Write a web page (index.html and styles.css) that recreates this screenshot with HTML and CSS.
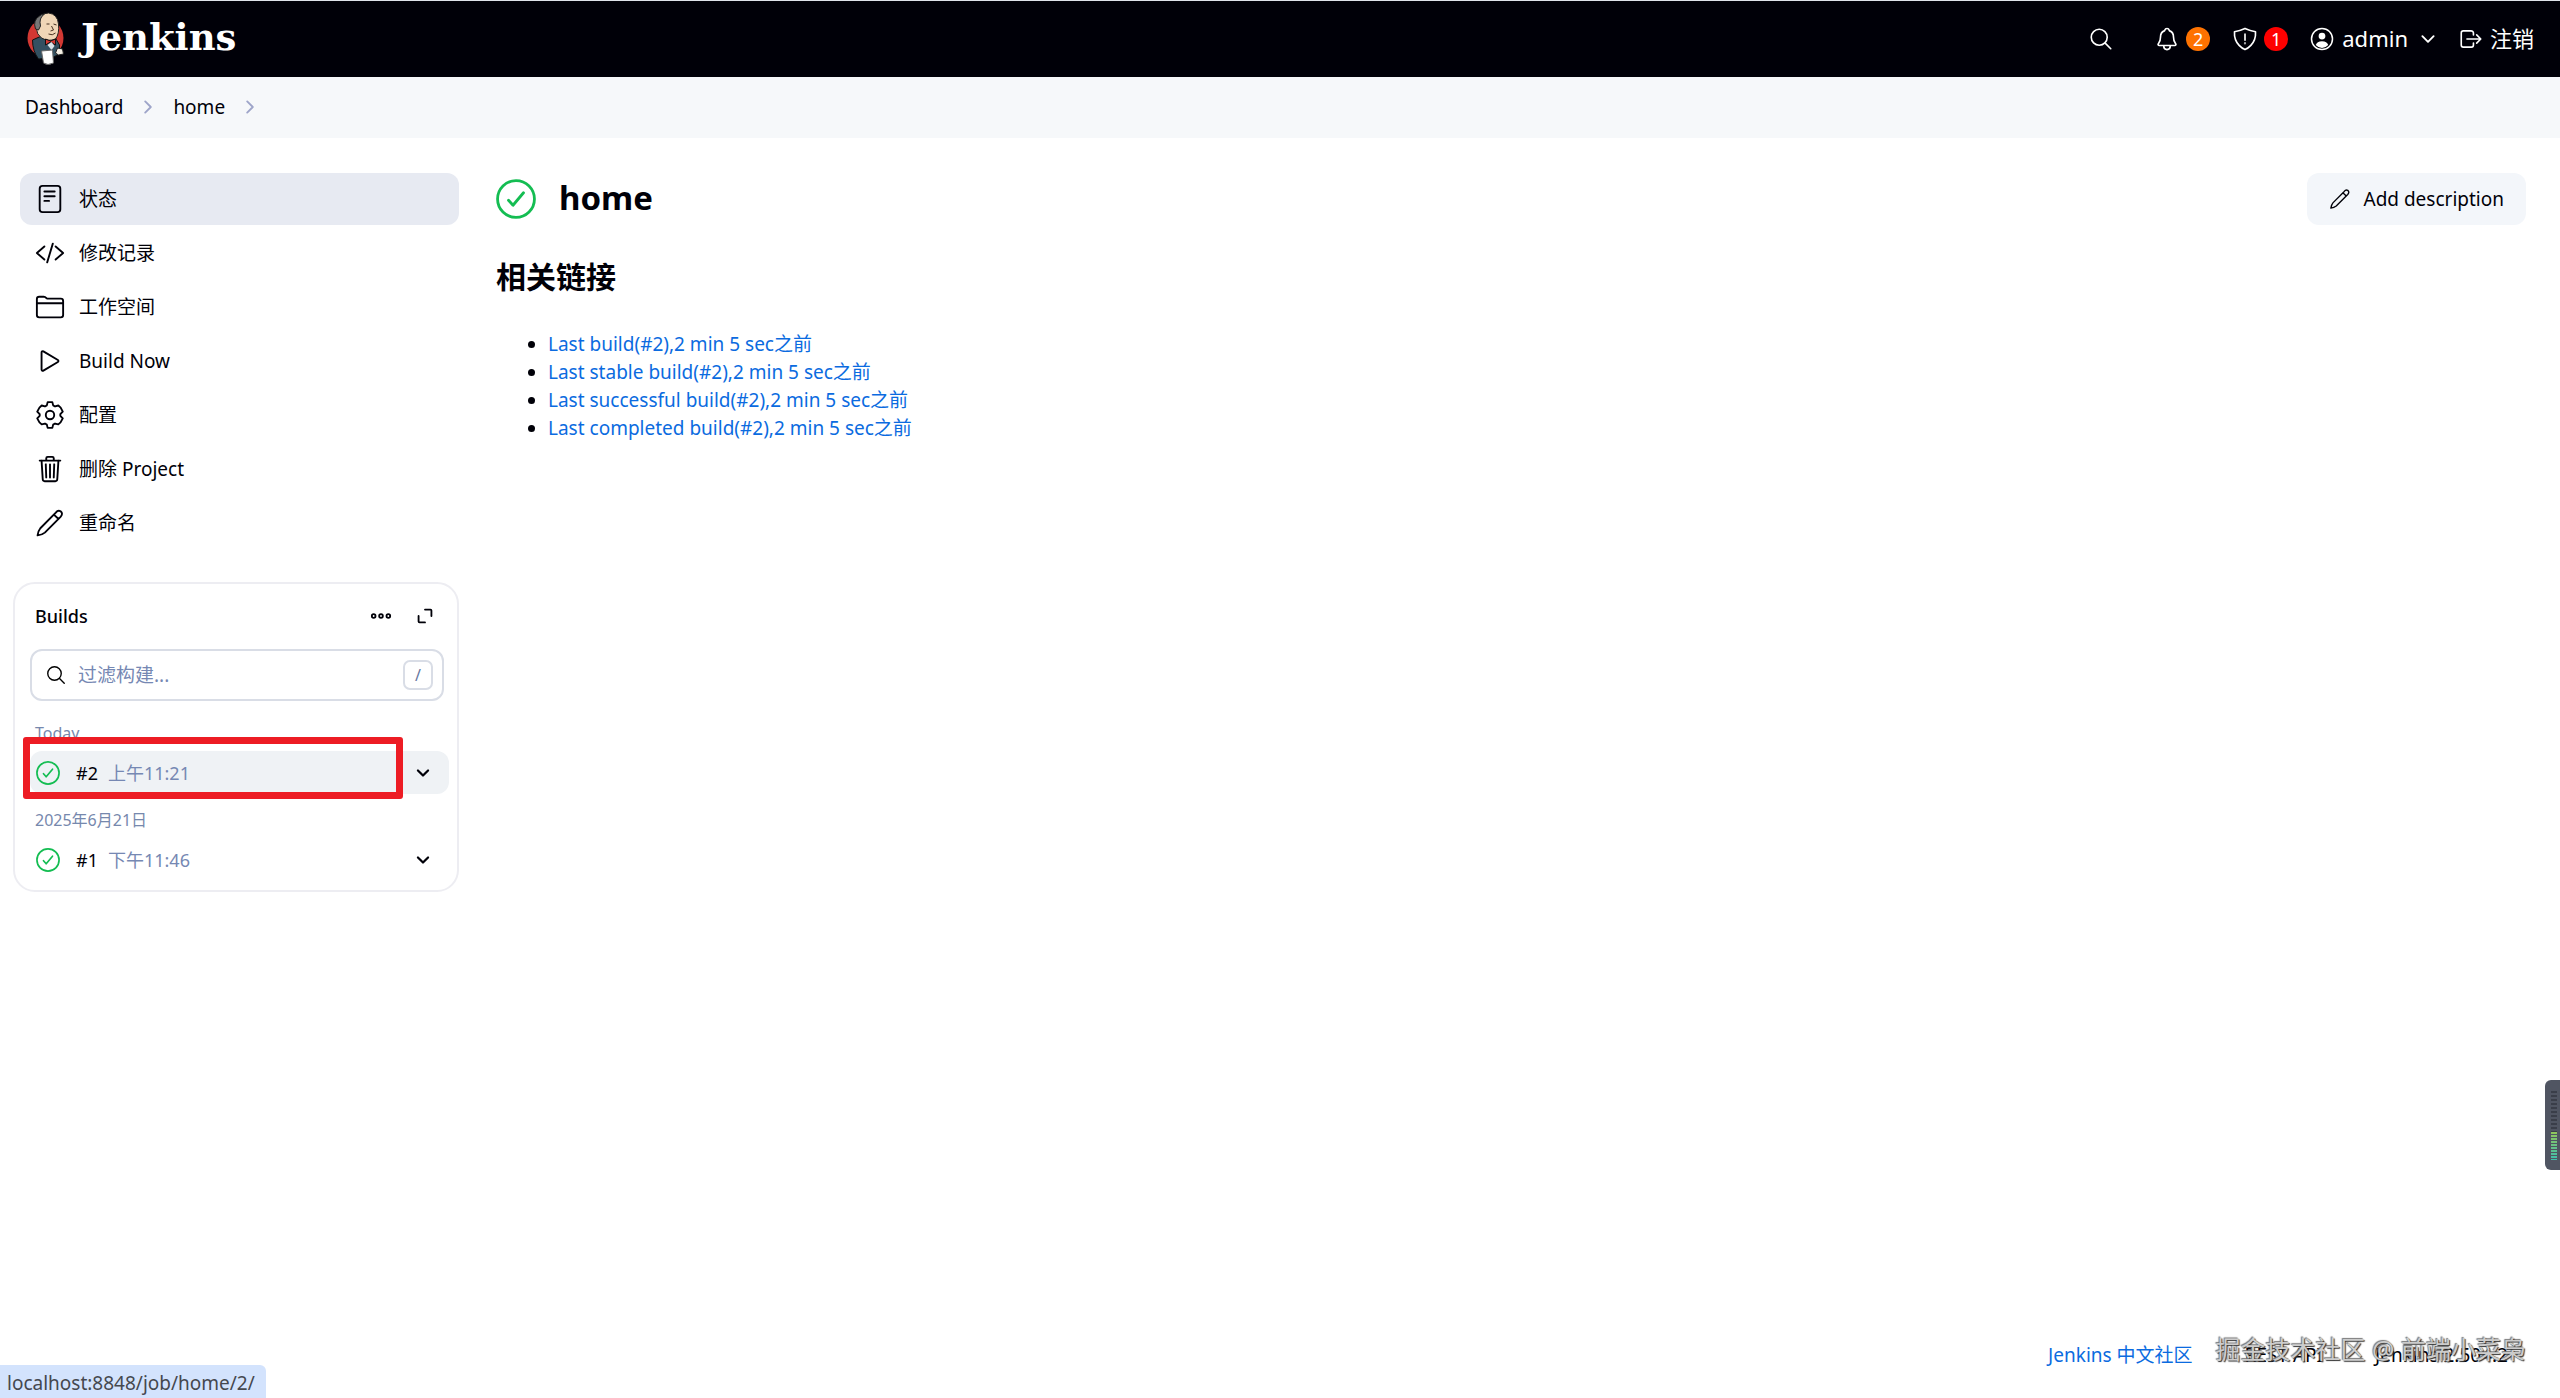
FILE: index.html
```html
<!DOCTYPE html>
<html lang="zh-CN">
<head>
<meta charset="utf-8">
<meta name="viewport" content="width=device-width, initial-scale=1">
<title>home [Jenkins]</title>
<link rel="stylesheet" href="styles.css">
</head>
<body>
<svg class="sprite" aria-hidden="true">
  <symbol id="i-search" viewBox="0 0 512 512"><path d="M221.09 64a157.09 157.09 0 10157.09 157.09A157.1 157.1 0 00221.09 64z" stroke-miterlimit="10"/><path d="M338.29 338.29L448 448"/></symbol>
  <symbol id="i-chevron" viewBox="0 0 512 512"><path d="M112 184l144 144 144-144"/></symbol>
  <symbol id="i-pencil" viewBox="0 0 512 512"><path d="M44 468C48 430 62 382 91 346L355 79Q392 29 437 56Q486 96 436 152L168 420C132 449 88 464 44 468ZM322 112L402 188"/></symbol>
  <symbol id="i-ok" viewBox="0 0 512 512"><circle cx="256" cy="256" r="236"/><path d="M352 176L217.600 336L160 272"/></symbol>
</svg>

<header class="header">
  <a class="brand" href="#">
    <svg class="mascot" viewBox="0 0 38 54" aria-hidden="true">
      <ellipse cx="19" cy="26" rx="18" ry="19" fill="#d33833"/>
      <path d="M6 28L15 24L29 26L33 33L33 42L25 46L12 47Q6 39 6 28Z" fill="#335061" stroke="#111" stroke-width="1"/>
      <path d="M10 11Q14 1 22 1Q31 2 32 12Q33 22 29 27Q22 30 15 26Q10 22 10 17Z" fill="#f0d6b7" stroke="#222" stroke-width="1"/>
      <path d="M9 17Q6 8 13 4Q15 2 18 2Q12 6 14 14L12 18Z" fill="#777" stroke="#222" stroke-width="1"/>
      <path d="M20 12L23 12M27 12L30 13M25 14L27 18L24 19M22 22Q26 24 29 21" fill="none" stroke="#473022" stroke-width="1"/>
      <path d="M19 27L24 29L29 27L29 33L24 30L19 33Z" fill="#d33833" stroke="#111" stroke-width="1"/>
      <path d="M21 33L25 30L28 34L25 38Z" fill="#dbe3e8"/>
      <path d="M31 36L36 37L37 42L32 43L29 41Z" fill="#f4eee4" stroke="#222" stroke-width="1"/>
      <path d="M15 39L26 38L27 51Q21 54 17 51Z" fill="#fff" stroke="#666" stroke-width="1"/>
    </svg>
    <span>Jenkins</span>
  </a>
  <nav class="tools" aria-label="Tools">
    <button class="tool tool-search" aria-label="Search"><svg class="icon i26"><use href="#i-search"/></svg></button>
    <button class="tool"><svg class="icon i26" viewBox="0 0 512 512" aria-hidden="true"><path d="M427.680 351.430C402 320 383.870 304 383.870 217.350C383.870 138 343.350 109.730 310 96c-4.430-1.820-8.600-6-9.950-10.550C294.200 65.540 277.800 48 256 48s-38.210 17.550-44 37.470c-1.350 4.600-5.520 8.710-9.950 10.530-33.390 13.750-73.870 41.920-73.870 121.350C128.130 304 110 320 84.320 351.430C73.680 364.450 83 384 101.610 384h308.880c18.510 0 27.770-19.610 17.190-32.570zM320 384v16a64 64 0 01-128 0v-16"/></svg><span class="badge orange">2</span></button>
    <button class="tool"><svg class="icon i26" viewBox="0 0 512 512" aria-hidden="true"><path d="M463.100 112.370C373.680 96.330 336.710 84.450 256 48c-80.710 36.450-117.680 48.330-207.100 64.370C32.700 369.130 240.580 457.790 256 464c15.420-6.210 223.300-94.870 207.100-351.630zM256 160v120"/><circle cx="256" cy="340" r="6"/></svg><span class="badge red">1</span></button>
    <button class="tool user"><svg class="icon i24" viewBox="0 0 512 512" aria-hidden="true"><circle cx="256" cy="256" r="224"/><circle cx="256" cy="192" r="72" class="solid"/><path class="solid" d="M122 386Q148 304 256 304T390 386Q334 448 256 448T122 386Z"/></svg><span class="label">admin</span><svg class="icon i20 bold-line"><use href="#i-chevron"/></svg></button>
    <a class="tool logout" href="#"><svg class="icon i26" viewBox="0 0 512 512" aria-hidden="true"><path d="M304 336v40a40 40 0 01-40 40H104a40 40 0 01-40-40V136a40 40 0 0140-40h152c22.090 0 48 17.910 48 40v40M368 336l80-80-80-80M176 256h256"/></svg><span class="label">注销</span></a>
  </nav>
</header>

<nav class="crumbs" aria-label="Breadcrumb">
  <a href="#">Dashboard</a><svg class="icon i20 turn"><use href="#i-chevron"/></svg>
  <a href="#">home</a><svg class="icon i20 turn"><use href="#i-chevron"/></svg>
</nav>

<div class="page">
  <aside class="side">
    <nav class="tasks" aria-label="Project">
      <a class="task active" href="#"><svg class="icon i30" viewBox="0 0 512 512"><rect x="80" y="32" width="352" height="448" rx="48"/><path d="M160 128h176M160 208h176M160 288h80"/></svg><span>状态</span></a>
      <a class="task" href="#"><svg class="icon i30" viewBox="0 0 512 512"><path d="M160 368L32 256l128-112M352 368l128-112-128-112M304 96l-96 320"/></svg><span>修改记录</span></a>
      <a class="task" href="#"><svg class="icon i30" viewBox="0 0 512 512"><path d="M440 432H72a40 40 0 01-40-40V120a40 40 0 0140-40h75.890a40 40 0 0122.190 6.720l27.840 18.560a40 40 0 0022.190 6.720H440a40 40 0 0140 40v240a40 40 0 01-40 40zM32 192h448"/></svg><span>工作空间</span></a>
      <button class="task"><svg class="icon i30" viewBox="0 0 512 512"><path d="M112 111v290c0 17.440 17 28.520 31 20.160l247.900-148.370c12.120-7.250 12.120-26.330 0-33.580L143 90.840c-14-8.360-31 2.720-31 20.160z"/></svg><span>Build Now</span></button>
      <a class="task" href="#"><svg class="icon i30" viewBox="0 0 512 512"><circle cx="256" cy="256" r="72"/><path d="M216 36H296L310 92L342 110L398 94L438 130L474 198L432 242V270L474 314L436 382L398 416L342 402L310 420L296 476H216L202 420L170 402L114 416L76 382L38 314L80 270V242L38 198L76 130L114 94L170 110L202 92Z"/></svg><span>配置</span></a>
      <button class="task"><svg class="icon i30" viewBox="0 0 512 512"><path d="M112 112l20 320c.95 18.490 14.400 32 32 32h184c17.670 0 30.870-13.510 32-32l20-320M80 112h352M192 112V72a24 24 0 0124-24h80a24 24 0 0124 24v40M256 176v224M184 176l8 224M328 176l-8 224"/></svg><span>删除 Project</span></button>
      <a class="task" href="#"><svg class="icon i30"><use href="#i-pencil"/></svg><span>重命名</span></a>
    </nav>

    <section class="builds">
      <div class="builds-head">
        <h2>Builds</h2>
        <button aria-label="More"><svg class="icon i22" viewBox="0 0 24 24" aria-hidden="true"><g class="thin"><circle cx="4" cy="12" r="2"/><circle cx="12" cy="12" r="2"/><circle cx="20" cy="12" r="2"/></g></svg></button>
        <button aria-label="Expand"><svg class="icon i22" viewBox="0 0 24 24" aria-hidden="true"><path class="thin" d="M12 5H18Q19 5 19 6V12M5 12V18Q5 19 6 19H12"/></svg></button>
      </div>
      <label class="filter">
        <svg class="icon i22"><use href="#i-search"/></svg>
        <input type="text" placeholder="过滤构建..." aria-label="过滤构建">
        <kbd>/</kbd>
      </label>
      <h3>Today</h3>
      <div class="build hovered">
        <a href="#"><svg class="icon i24 ok"><use href="#i-ok"/></svg><span>#2</span><time>上午11:21</time></a>
        <button aria-label="#2"><svg class="icon i18 heavy"><use href="#i-chevron"/></svg></button>
        <span class="marker"></span>
      </div>
      <h3>2025年6月21日</h3>
      <div class="build">
        <a href="#"><svg class="icon i24 ok"><use href="#i-ok"/></svg><span>#1</span><time>下午11:46</time></a>
        <button aria-label="#1"><svg class="icon i18 heavy"><use href="#i-chevron"/></svg></button>
      </div>
    </section>
  </aside>

  <main class="main">
    <div class="title-bar">
      <svg class="icon i40 ok"><use href="#i-ok"/></svg>
      <h1>home</h1>
      <button class="describe"><svg class="icon i22"><use href="#i-pencil"/></svg><span>Add description</span></button>
    </div>
    <h2 class="links-title">相关链接</h2>
    <ul class="links">
      <li><a href="#">Last build(#2),2 min 5 sec之前</a></li>
      <li><a href="#">Last stable build(#2),2 min 5 sec之前</a></li>
      <li><a href="#">Last successful build(#2),2 min 5 sec之前</a></li>
      <li><a href="#">Last completed build(#2),2 min 5 sec之前</a></li>
    </ul>
  </main>
</div>

<footer class="footer">
  <a class="community" href="#">Jenkins 中文社区</a>
  <a href="#">REST API</a>
  <button>Jenkins 2.504.2</button>
</footer>

<div class="watermark">掘金技术社区 @ 前端小菜枭</div>
<div class="status">localhost:8848/job/home/2/</div>
<div class="meter"><span class="meter-off"></span><span class="meter-on"></span></div>
</body>
</html>
```
FILE: styles.css
```css
* { box-sizing: border-box; }

body {
  margin: 0;
  min-height: 100vh;
  display: flex;
  flex-direction: column;
  background: #fff;
  color: #000008;
  font: 19px/28px "Noto Sans", "Noto Sans CJK SC", sans-serif;
}

a { color: inherit; text-decoration: none; }
button { padding: 0; border: 0; background: none; color: inherit; font: inherit; cursor: pointer; }
h1, h2, h3 { margin: 0; }

.sprite { display: none; }

.icon {
  flex: none;
  fill: none;
  stroke: currentColor;
  stroke-width: 32;
  stroke-linecap: round;
  stroke-linejoin: round;
}
.i18 { width: 18px; height: 18px; }
.i20 { width: 20px; height: 20px; }
.i22 { width: 22px; height: 22px; }
.i24 { width: 24px; height: 24px; }
.i26 { width: 26px; height: 26px; }
.i30 { width: 30px; height: 30px; }
.i40 { width: 40px; height: 40px; }
.solid { fill: currentColor; stroke: none; }
.bold-line { stroke-width: 48; }
.heavy { stroke-width: 64; }
.thin { stroke-width: 2; }
.ok { color: #14bd52; stroke-width: 36; }
.turn { transform: rotate(-90deg); color: #9ea5c9; stroke-width: 48; }

/* Header */
.header {
  display: flex;
  align-items: center;
  justify-content: space-between;
  height: 77px;
  padding: 0 26px;
  border-top: 1px solid #dfe3ea;
  background: #000008;
  color: #fff;
}
.brand { display: flex; align-items: center; gap: 16px; font: bold 37px/48px "DejaVu Serif", serif; }
.brand span { padding-bottom: 4px; }
.mascot { width: 39px; height: 54px; }
.tools { display: flex; align-items: center; font-size: 22px; }
.tool { display: flex; align-items: center; gap: 6px; margin-left: 22px; }
.tool-search { margin-right: 18px; }
.label { padding-bottom: 2px; }
.user { gap: 8px; }
.user .i20 { margin-left: 2px; }
.tools .logout { margin-left: 20px; }
.badge { width: 24px; height: 24px; border-radius: 50%; font-size: 18px; line-height: 24px; }
.orange { background: #fe7200; }
.red { background: #fe0000; }

/* Breadcrumbs */
.crumbs { display: flex; align-items: center; gap: 15px; height: 61px; padding: 0 25px 2px; background: #f6f8fa; }

/* Page */
.page { display: flex; flex: 1; gap: 35px; padding: 35px 34px 0 13px; }
.side { flex: none; width: 446px; }
.tasks { display: flex; flex-direction: column; gap: 2px; padding-left: 7px; }
.task { display: flex; align-items: center; gap: 14px; height: 52px; padding: 0 15px; border-radius: 12px; text-align: left; }
.active { background: #e7eaf2; }

.builds { margin-top: 33px; padding: 0 8px 9px 15px; border: 2px solid #ededf2; border-radius: 22px; }
.builds-head { display: flex; align-items: center; gap: 22px; height: 63px; padding: 0 13px 0 5px; }
.builds-head h2 { flex: 1; font-size: 18px; font-weight: 500; }
.builds-head button { display: flex; }
.filter { display: flex; align-items: center; gap: 9px; height: 52px; margin: 2px 5px 18px 0; padding: 0 9px 0 13px; border: 2px solid #d9dde6; border-radius: 12px; }
.filter .icon { color: #000; }
.filter input { flex: 1; min-width: 0; padding: 0 2px; border: 0; outline: 0; background: none; font: inherit; }
.filter input::placeholder { color: #7688b3; opacity: 1; }
.filter kbd { width: 30px; height: 30px; border: 2px solid #d9dde6; border-radius: 7px; color: #66779f; font: 16px/26px "Noto Sans", sans-serif; text-align: center; }
.builds h3 { padding: 0 5px; color: #7688ad; font-size: 16px; font-weight: 400; line-height: 28px; }
.build { position: relative; display: flex; height: 43px; margin: 4px 0 12px; border-radius: 12px; font-size: 18px; }
.build:last-child { margin-bottom: 0; }
.build a { display: flex; flex: 1; align-items: center; padding-left: 6px; }
.build a span { margin-left: 16px; }
.build time { margin-left: 10px; color: #7688b3; }
.build button { display: flex; align-items: center; padding: 0 17px; }
.hovered { background: #eff2f5; }
.marker { position: absolute; inset: -14px 46px -5px -7px; border: 7px solid #ed1c24; border-radius: 3px; pointer-events: none; }

.main { flex: 1; min-width: 0; padding-left: 2px; }
.title-bar { display: flex; align-items: center; gap: 23px; height: 52px; }
.title-bar h1 { flex: 1; padding-bottom: 2px; font-size: 33px; line-height: 40px; }
.describe { display: flex; align-items: center; gap: 12px; height: 52px; padding: 0 22px; border-radius: 12px; background: #f3f6fa; }
.links-title { margin-top: 32px; font-size: 30px; line-height: 40px; }
.links { margin: 33px 0 0; padding-left: 52px; }
.links a { color: #0b6be0; }

.footer { display: flex; justify-content: flex-end; gap: 52px; padding: 0 52px 29px; }
.community { color: #0b6be0; }

/* Overlays */
.watermark { position: absolute; right: 34px; bottom: 29px; color: #ccc; font-size: 25px; line-height: 40px; text-shadow: 1px 1px 1px #333, -1px -1px 1px #777; }
.status { position: fixed; left: 0; bottom: 0; padding: 4px 11px 1px 7px; border-radius: 0 6px 0 0; background: #d3e3fd; color: #45484f; }
.meter { position: fixed; right: 0; bottom: 228px; display: flex; flex-direction: column; width: 15px; height: 90px; padding: 11px 3px 10px 6px; border-radius: 6px 0 0 6px; background: #505562; }
.meter-off { height: 41px; background: repeating-linear-gradient(#3a3e49 0 2px, #505562 2px 4px); }
.meter-on { flex: 1; background: repeating-linear-gradient(transparent 0 2px, #505562 2px 3px), linear-gradient(#91c65b, #3fbfad); }
```
